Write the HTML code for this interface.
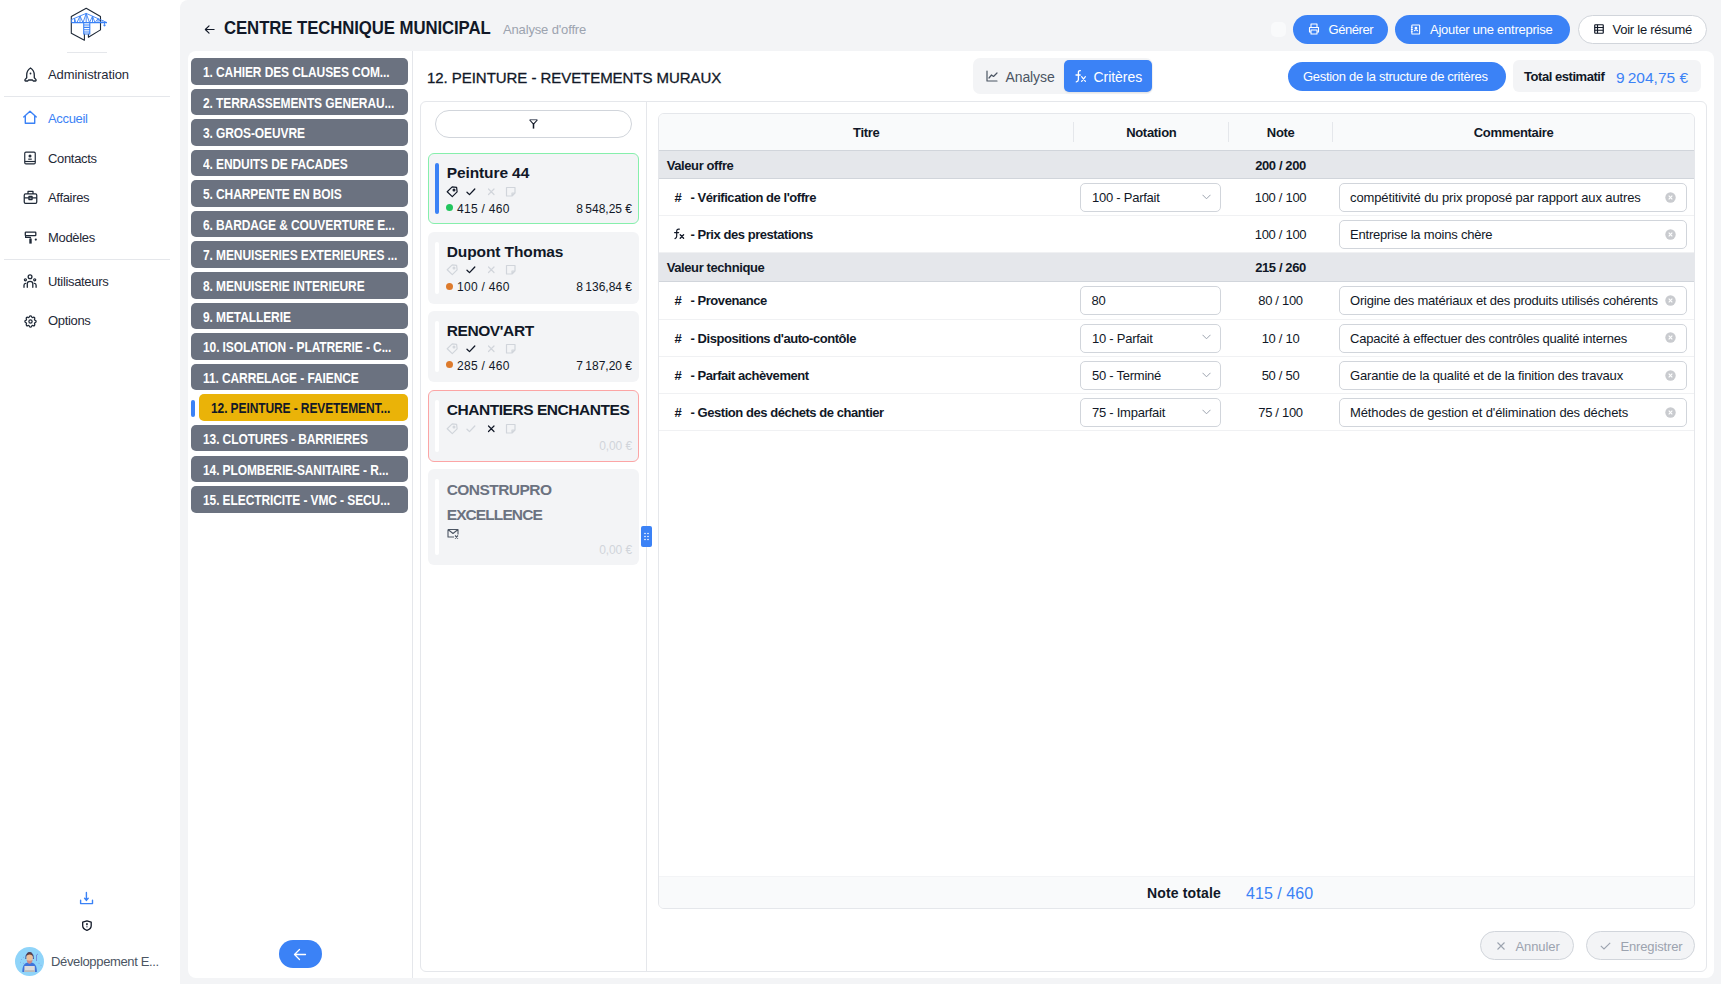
<!DOCTYPE html>
<html><head><meta charset="utf-8">
<style>
*{box-sizing:border-box;margin:0;padding:0}
html,body{width:1721px;height:984px;overflow:hidden;background:#fff;font-family:"Liberation Sans",sans-serif;color:#111827}
.abs{position:absolute}
svg{display:block}
/* sidebar */
.nav{position:absolute;left:48px;font-size:13px;color:#1f2937;white-space:nowrap;letter-spacing:-0.33px}
.nicon{position:absolute;left:23px;width:14px;height:14px}
.sep{position:absolute;height:1px;background:#e5e7eb}
/* gray area */
#gray{position:absolute;left:180px;top:0;width:1541px;height:984px;background:#f3f4f6;border-top-left-radius:8px}
#panel{position:absolute;left:188px;top:51px;width:1526px;height:927px;background:#fff;border-radius:8px}
.lot{position:absolute;left:191px;width:217px;height:26.5px;border-radius:5px;background:#6b7280;color:#fff;font-weight:700;font-size:14px;line-height:28.5px;padding-left:12px;white-space:nowrap;letter-spacing:-0.1px}
.lot span{display:inline-block;transform:scaleX(0.855);transform-origin:0 50%}
.btn{position:absolute;border-radius:999px;background:#3b82f6;color:#fff;font-size:13px;white-space:nowrap}
.card{position:absolute;left:428px;width:211px;background:#f3f4f6;border-radius:6px;border:1px solid transparent}
.card .bar{position:absolute;left:6px;top:9px;width:4px;border-radius:2px;background:#fff}
.card .ttl{position:absolute;left:17.7px;font-size:15.5px;font-weight:700;color:#111827;white-space:nowrap;letter-spacing:-0.1px}
.card .score{position:absolute;left:28px;font-size:12px;color:#111827;white-space:nowrap}
.card .amt{position:absolute;right:6px;font-size:12px;color:#111827;white-space:nowrap;letter-spacing:-0.1px}
.card .dot{position:absolute;left:17px;width:7px;height:7px;border-radius:50%}
.card .icons{position:absolute;left:18px;height:12px}
/* table */
#tbl{position:absolute;left:658px;top:113px;width:1037px;height:796px;border:1px solid #e5e7eb;border-radius:6px;overflow:hidden;background:#fff}
.th{position:absolute;top:0;height:37px;background:#f9fafb;font-size:13px;font-weight:700;line-height:37px;text-align:center;color:#111827}
.row{position:absolute;left:0;width:1035px;border-bottom:1px solid #f3f4f6;font-size:13px}
.grp{position:absolute;left:0;width:1035px;background:#e5e7eb;border-bottom:1px solid #d1d5db;font-size:13px;font-weight:700}
.sel{position:absolute;left:421px;width:141px;height:29px;border:1px solid #d1d5db;border-radius:5px;background:#fff;font-size:13px;line-height:27px;padding-left:11px;white-space:nowrap;letter-spacing:-0.2px}
.cmt{position:absolute;left:680px;width:348px;height:29px;border:1px solid #d1d5db;border-radius:5px;background:#fff;font-size:13px;line-height:27px;padding-left:10px;white-space:nowrap;letter-spacing:-0.25px}
.note{position:absolute;left:570px;width:104px;text-align:center;font-size:13px;white-space:nowrap;letter-spacing:-0.2px}
.rt{position:absolute;left:15px;font-size:13px;font-weight:700;white-space:nowrap;letter-spacing:-0.35px}
</style></head>
<body>
<!-- SIDEBAR -->
<div id="sidebar">
 <svg class="abs" style="left:60px;top:0px" width="55" height="50" viewBox="60 0 55 50">
  <path d="M84.4 33.8 L84.4 40.2 L71.3 33.2 L71.3 16.5 L86.2 8.3 L100.5 16.5 L100.5 29.9 L88.4 37.2 L88.4 33.8" fill="none" stroke="#1f2937" stroke-width="1.1" stroke-linejoin="round"/>
  <g stroke="#3b82f6" stroke-width="0.9" fill="none">
   <path d="M71.6 22.6 L107 22.6" stroke-width="1.1"/>
   <path d="M71.6 19.5 L86.2 13.4 L107 22.6"/>
   <path d="M86.2 13.4 L86.2 22.6 M80 16 L80 22.6 M74.5 18.3 L74.5 22.6 M92.5 16.2 L92.5 22.6 M98 18.7 L98 22.6"/>
   <path d="M71.6 19.5 L71.6 22.6 M74.5 18.3 L76 22.6 M80 16 L77 22.6 M80 16 L83 22.6 M86.2 13.4 L83 22.6 M86.2 13.4 L89.5 22.6 M92.5 16.2 L89.5 22.6 M92.5 16.2 L95 22.6 M98 18.7 L95 22.6 M98 18.7 L101 22.6 M103 20.5 L101 22.6"/>
   <path d="M83.7 22.6 L83.7 34 L89.8 34 L89.8 22.6 M83.7 25 H89.8 M83.7 27.4 H89.8 M83.7 29.8 H89.8 M83.7 32 H89.8" stroke-width="1.1"/>
   <path d="M104.5 22.6 V24.5"/>
  </g>
  <circle cx="104.5" cy="25.3" r="1.1" fill="#3b82f6"/>
 </svg>
 <div class="sep" style="left:67px;top:52px;width:40px"></div>
 <svg class="nicon" style="top:66.5px;left:23.5px;width:13px;height:15px" viewBox="0 0 13 15" fill="none" stroke="#1f2937" stroke-width="1.3" stroke-linejoin="round"><path d="M6.5 1C3.8 2.6 2.7 5 2.7 8.2v2.6L1 12.6c-.3.4 0 1.4.6 1.4h2.2l.7-1h4l.7 1h2.2c.6 0 .9-1 .6-1.4l-1.7-1.8V8.2C10.3 5 9.2 2.6 6.5 1z"/><circle cx="6.5" cy="6.5" r=".9" fill="#1f2937" stroke="none"/></svg>
 <div class="nav" style="top:67.8px;line-height:13px;letter-spacing:-0.1px">Administration</div>
 <div class="sep" style="left:4px;top:96px;width:166px"></div>
 <svg class="abs" style="left:22px;top:109px" width="16" height="16" viewBox="22 109 16 16" fill="none" stroke="#3b82f6" stroke-width="1.4" stroke-linejoin="round" stroke-linecap="round"><path d="M23.7 116.9L30 111.3 36.3 116.9M25.3 115.6V123.2H34.7V115.6"/></svg>
 <div class="nav" style="top:111.7px;line-height:13px;color:#3b82f6">Accueil</div>
 <svg class="nicon" style="top:151px" viewBox="0 0 24 24" fill="none" stroke="#1f2937" stroke-width="2" stroke-linejoin="round"><rect x="3" y="2" width="18" height="20" rx="2"/><path d="M3 18h18"/><circle cx="12" cy="8.5" r="1.6" fill="#1f2937"/><path d="M9 14h6" /></svg>
 <div class="nav" style="top:152.4px;line-height:13px">Contacts</div>
 <svg class="nicon" style="top:189.5px;left:22.5px;width:15px;height:14px" viewBox="0 0 24 22" fill="none" stroke="#1f2937" stroke-width="2" stroke-linejoin="round"><rect x="2" y="6" width="20" height="15" rx="2"/><path d="M8 6V2h8v4M2 12.5h20"/><rect x="9.5" y="10" width="5" height="5"/></svg>
 <div class="nav" style="top:191px;line-height:13px">Affaires</div>
 <svg class="nicon" style="top:231px;left:23.5px;width:14px;height:13px" viewBox="0 0 14 13" fill="none" stroke="#1f2937" stroke-linejoin="round"><rect x="1.3" y="1.1" width="10.5" height="3.6" rx=".6" stroke-width="1.3"/><path d="M1.6 4.7V6.4H6.5V7.6" stroke-width="1.2"/><rect x="5.3" y="7.6" width="2.4" height="5" fill="#1f2937" stroke="none"/><circle cx="11.8" cy="8.6" r="1.1" fill="#1f2937" stroke="none"/></svg>
 <div class="nav" style="top:230.6px;line-height:13px">Modèles</div>
 <div class="sep" style="left:4px;top:259px;width:166px"></div>
 <svg class="abs" style="left:22px;top:272px" width="16" height="17" viewBox="22 272 16 17" fill="none" stroke="#1f2937" stroke-width="1.3" stroke-linecap="round"><circle cx="30.05" cy="276.8" r="1.9"/><circle cx="25.4" cy="279.8" r="1.05" stroke-width="1.2"/><circle cx="34.7" cy="279.8" r="1.05" stroke-width="1.2"/><path d="M27.3 287.3V283.6C27.3 282.1 28.5 281.4 30.05 281.4S32.8 282.1 32.8 283.6V287.3"/><path d="M24 287.3V285.2C24 284.2 24.6 283.5 25.7 283.4M36.1 287.3V285.2C36.1 284.2 35.5 283.5 34.4 283.4"/></svg>
 <div class="nav" style="top:274.7px;line-height:13px">Utilisateurs</div>
 <svg class="nicon" style="top:313.8px;left:22.5px;width:15px;height:15px" viewBox="0 0 24 24" fill="none" stroke="#1f2937" stroke-width="2" stroke-linejoin="round"><path d="M10.325 4.317c.426-1.756 2.924-1.756 3.35 0a1.724 1.724 0 0 0 2.573 1.066c1.543-.94 3.31.826 2.37 2.37a1.724 1.724 0 0 0 1.065 2.572c1.756.426 1.756 2.924 0 3.35a1.724 1.724 0 0 0-1.066 2.573c.94 1.543-.826 3.31-2.37 2.37a1.724 1.724 0 0 0-2.572 1.065c-.426 1.756-2.924 1.756-3.35 0a1.724 1.724 0 0 0-2.573-1.066c-1.543.94-3.31-.826-2.37-2.37a1.724 1.724 0 0 0-1.065-2.572c-1.756-.426-1.756-2.924 0-3.35a1.724 1.724 0 0 0 1.066-2.573c-.94-1.543.826-3.31 2.37-2.37 1 .608 2.296.07 2.572-1.065z"/><circle cx="12" cy="12" r="2.6"/></svg>
 <div class="nav" style="top:314.4px;line-height:13px">Options</div>
 <svg class="abs" style="left:78px;top:889px" width="17" height="17" viewBox="78 889 17 17" fill="none" stroke="#3b82f6" stroke-width="1.4" stroke-linecap="round" stroke-linejoin="round"><path d="M86.4 892.4V900.4M84.6 898.3L86.4 900.4 88.2 898.3M80.6 900.3V903.6H92.5V900.3"/></svg>
 <svg class="abs" style="left:80px;top:918px" width="14" height="15" viewBox="80 918 14 15" fill="none" stroke="#111827" stroke-width="1.3" stroke-linejoin="round"><path d="M86.95 920.9L82.7 922.2V925.8C82.7 928 84.5 929.6 86.95 930.3 89.4 929.6 91.2 928 91.2 925.8V922.2Z"/><path d="M86.95 923.8V924.6" stroke-width="1.6" stroke-linecap="round"/><path d="M86.95 926V927.4" stroke="#6b7280" stroke-width="1.3"/></svg>
 <div class="abs" style="left:15px;top:947px;width:29px;height:29px;border-radius:50%;background:#8fd4f9;overflow:hidden">
  <svg width="29" height="29" viewBox="0 0 29 29">
   <g fill="#7b8fd8" opacity=".7"><circle cx="6.5" cy="12.5" r=".5"/><circle cx="8.5" cy="10.2" r=".5"/><circle cx="5.5" cy="15.3" r=".5"/><circle cx="8.5" cy="16.3" r=".5"/><circle cx="24" cy="16.3" r=".5"/><circle cx="26" cy="18.3" r=".5"/></g>
   <path d="M21.5 8v6M21.5 8l1.5-1" stroke="#6f7fd6" stroke-width=".8" fill="none"/>
   <path d="M7.3 25c0-6 1.8-9.8 7.3-9.8s7.3 3.8 7.3 9.8z" fill="#3f74da"/>
   <ellipse cx="14.6" cy="10.6" rx="3.3" ry="4.1" fill="#ecc19c"/>
   <path d="M11.6 13c.5 2.6 1.6 3.8 3 3.8s2.5-1.2 3-3.8c-1 .6-2 .8-3 .8s-2-.2-3-.8z" fill="#d08c86"/>
   <path d="M11.2 9.5c0-3 1.5-4.4 3.4-4.4s3.4 1.4 3.4 4.4c-.8-1.3-2-2-3.4-2s-2.6.7-3.4 2z" fill="#6b4030"/>
   <path d="M10.8 12c-.4-4 1.4-6.2 3.8-6.2s4.2 2.2 3.8 6.2" stroke="#3a4585" stroke-width=".9" fill="none"/>
   <rect x="9.4" y="19" width="10.4" height="6" rx=".6" fill="#dcdcdc"/>
   <rect x="9.4" y="23.2" width="10.4" height="1.8" fill="#b9b9b9"/>
  </svg>
 </div>
 <div class="nav" style="left:51px;top:955px;line-height:13px;color:#4b5563;letter-spacing:-0.35px">Développement E...</div>
</div>
<div id="gray"></div>
<div id="panel"></div>

<svg class="abs" style="left:204px;top:23.5px" width="11" height="11" viewBox="0 0 12 12" fill="none" stroke="#111827" stroke-width="1.3" stroke-linecap="round" stroke-linejoin="round"><path d="M11 6H1.5M5.5 2L1.5 6l4 4"/></svg>
<div class="abs" style="left:224px;top:18.6px;font-size:18px;line-height:18px;font-weight:700;letter-spacing:-0.1px;white-space:nowrap;color:#111827;transform:scaleX(0.932);transform-origin:0 50%">CENTRE TECHNIQUE MUNICIPAL</div>
<div class="abs" style="left:503px;top:22.8px;font-size:13px;line-height:13px;color:#9ca3af;white-space:nowrap;letter-spacing:-0.15px">Analyse d'offre</div>
<div class="abs" style="left:1271px;top:21.5px;width:15px;height:15px;border-radius:5px;background:#f9fafb"></div>
<div class="btn" style="left:1293px;top:15px;width:95px;height:29px"></div>
<svg class="abs" style="left:1308.3px;top:23px" width="12" height="12" viewBox="0 0 24 24" fill="none" stroke="#fff" stroke-width="2.2" stroke-linejoin="round"><path d="M6 9V2h12v7M6 18H3V9h18v9h-3"/><rect x="6" y="14" width="12" height="8"/></svg>
<div class="abs" style="left:1328.5px;top:22.8px;font-size:13px;line-height:13px;color:#fff;white-space:nowrap;letter-spacing:-0.45px">Générer</div>
<div class="btn" style="left:1395px;top:15px;width:175px;height:29px"></div>
<svg class="abs" style="left:1410.3px;top:23.5px" width="11" height="11" viewBox="0 0 22 24" fill="none" stroke="#fff" stroke-width="2.2" stroke-linejoin="round"><rect x="3" y="2" width="17" height="20" rx="1.5"/><path d="M1 7h4M1 12h4M1 17h4"/><circle cx="12" cy="9" r="2" fill="#fff"/><path d="M8 16c0-2 2-3 4-3s4 1 4 3"/></svg>
<div class="abs" style="left:1430px;top:22.8px;font-size:13px;line-height:13px;color:#fff;white-space:nowrap;letter-spacing:-0.25px">Ajouter une entreprise</div>
<div class="btn" style="left:1577.5px;top:15px;width:129px;height:29px;background:#fff;border:1px solid #d1d5db"></div>
<svg class="abs" style="left:1594px;top:24px" width="10" height="10" viewBox="0 0 20 20" fill="none" stroke="#111827" stroke-width="2.4"><rect x="1.5" y="1.5" width="17" height="17" rx="1"/><path d="M1.5 7h17M1.5 12.5h17M7 1.5v17"/></svg>
<div class="abs" style="left:1612.5px;top:22.8px;font-size:13px;line-height:13px;color:#111827;white-space:nowrap;letter-spacing:-0.25px">Voir le résumé</div>
<div class="lot" style="top:58.00px"><span>1. CAHIER DES CLAUSES COM...</span></div>
<div class="lot" style="top:88.58px"><span>2. TERRASSEMENTS GENERAU...</span></div>
<div class="lot" style="top:119.16px"><span>3. GROS-OEUVRE</span></div>
<div class="lot" style="top:149.74px"><span>4. ENDUITS DE FACADES</span></div>
<div class="lot" style="top:180.32px"><span>5. CHARPENTE EN BOIS</span></div>
<div class="lot" style="top:210.90px"><span>6. BARDAGE &amp; COUVERTURE E...</span></div>
<div class="lot" style="top:241.48px"><span>7. MENUISERIES EXTERIEURES ...</span></div>
<div class="lot" style="top:272.06px"><span>8. MENUISERIE INTERIEURE</span></div>
<div class="lot" style="top:302.64px"><span>9. METALLERIE</span></div>
<div class="lot" style="top:333.22px"><span>10. ISOLATION - PLATRERIE - C...</span></div>
<div class="lot" style="top:363.80px"><span>11. CARRELAGE - FAIENCE</span></div>
<div class="abs" style="left:191px;top:399.58px;width:4px;height:17.5px;border-radius:2px;background:#3b82f6"></div><div class="lot" style="top:394.38px;left:199px;width:209px;background:#eab308;color:#111827"><span>12. PEINTURE - REVETEMENT...</span></div>
<div class="lot" style="top:424.96px"><span>13. CLOTURES - BARRIERES</span></div>
<div class="lot" style="top:455.54px"><span>14. PLOMBERIE-SANITAIRE - R...</span></div>
<div class="lot" style="top:486.12px"><span>15. ELECTRICITE - VMC - SECU...</span></div>
<div class="abs" style="left:412px;top:51px;width:1px;height:927px;background:#e5e7eb"></div>

<div class="abs" style="left:427px;top:70.2px;font-size:15px;line-height:15px;color:#111827;white-space:nowrap;letter-spacing:-0.05px;-webkit-text-stroke:0.3px #111827">12. PEINTURE - REVETEMENTS MURAUX</div>
<div class="abs" style="left:973px;top:58px;width:180px;height:36px;border-radius:7px;background:#f3f4f6"></div>
<div class="abs" style="left:1064px;top:60px;width:88px;height:32px;border-radius:5px;background:#3b82f6;box-shadow:0 1px 2px rgba(0,0,0,.08)"></div>
<svg class="abs" style="left:986px;top:70px" width="12" height="12" viewBox="0 0 12 12" fill="none" stroke="#4b5563" stroke-width="1.2" stroke-linecap="round" stroke-linejoin="round"><path d="M1 1v10h10"/><path d="M3 8l2.5-3 2 1.5L11 3"/></svg>
<div class="abs" style="left:1005.5px;top:70.2px;font-size:14px;line-height:14px;color:#4b5563;white-space:nowrap;letter-spacing:-0.1px">Analyse</div>
<svg class="abs" style="left:1073px;top:68px" width="15" height="16" viewBox="1073 68 15 16" fill="none" stroke="#fff" stroke-width="1.3" stroke-linecap="round"><path d="M1080.3 70.6C1079 70.3 1078.4 71.3 1078.4 72.6V79.5C1078.4 80.8 1077.5 81.6 1076.3 81.8"/><path d="M1076 75H1080.2"/><path d="M1081.6 76.6L1085.4 81.3M1085.4 76.6L1081.6 81.3" stroke-width="1.2"/></svg>
<div class="abs" style="left:1093.5px;top:70.2px;font-size:14px;line-height:14px;color:#fff;white-space:nowrap;letter-spacing:-0.05px">Critères</div>
<div class="btn" style="left:1288px;top:62px;width:218px;height:29px"></div>
<div class="abs" style="left:1303px;top:69.8px;font-size:13px;line-height:13px;color:#fff;white-space:nowrap;letter-spacing:-0.3px">Gestion de la structure de critères</div>
<div class="abs" style="left:1513px;top:60px;width:187.5px;height:32px;border-radius:6px;background:#f3f4f6"></div>
<div class="abs" style="left:1524px;top:69.8px;font-size:13px;line-height:13px;font-weight:700;color:#111827;white-space:nowrap;letter-spacing:-0.45px">Total estimatif</div>
<div class="abs" style="left:1616px;top:69.5px;font-size:15.5px;line-height:15.5px;color:#3b82f6;white-space:nowrap;letter-spacing:0.15px">9&#8239;204,75 €</div>
<div class="abs" style="left:420px;top:101px;width:1287px;height:870.5px;border:1px solid #e5e7eb;border-radius:6px"></div>
<div class="abs" style="left:646px;top:102px;width:1px;height:869px;background:#e5e7eb"></div>
<div class="abs" style="left:435px;top:110px;width:197px;height:28px;border:1px solid #d1d5db;border-radius:14px;background:#fff"></div>
<svg class="abs" style="left:528.5px;top:119px" width="9" height="10" viewBox="0 0 9 10" fill="none" stroke-linejoin="round"><path d="M0.6 0.7H8.4" stroke="#6b7280" stroke-width="1.2"/><path d="M0.7 1L4.5 5.2 8.3 1" stroke="#111827" stroke-width="1.1"/><path d="M4.5 5V9.6" stroke="#111827" stroke-width="1.5"/></svg>
<div class="abs" style="left:641px;top:526px;width:11px;height:21px;border-radius:2px;background:#3b82f6"></div>
<svg class="abs" style="left:641px;top:526px" width="11" height="21" viewBox="0 0 11 21" fill="#fff"><circle cx="4" cy="7.5" r=".8"/><circle cx="7" cy="7.5" r=".8"/><circle cx="4" cy="10.5" r=".8"/><circle cx="7" cy="10.5" r=".8"/><circle cx="4" cy="13.5" r=".8"/><circle cx="7" cy="13.5" r=".8"/></svg>
<div class="btn" style="left:279px;top:940px;width:43px;height:28px"></div>
<svg class="abs" style="left:293px;top:947.5px" width="14" height="13" viewBox="0 0 14 13" fill="none" stroke="#fff" stroke-width="1.3" stroke-linecap="round" stroke-linejoin="round"><path d="M12.5 6.5H1.5M6.5 1.5l-5 5 5 5"/></svg>
<!--CARDS-START-->
<div class="card" style="top:153.4px;height:71px;border-color:#86efac"><div class="bar" style="height:51.0px;background:#3b82f6"></div><div class="ttl" style="top:10.93px;line-height:15px">Peinture 44</div><svg class="abs" style="left:17.3px;top:31.4px" width="72" height="12" viewBox="0 0 72 12" fill="none" stroke-width="1.2" stroke-linejoin="round" stroke-linecap="round">
<path d="M1.2 5.7 L6.2 0.9 L10.6 1.4 L11.1 5.8 L6.3 10.6 Z" stroke="#111827"/><circle cx="8" cy="4" r=".9" stroke="#111827"/>
<path d="M21 6.2 L23.5 8.6 L28.8 3" stroke="#111827" stroke-width="1.3"/>
<path d="M42.5 3 L48 8.5 M48 3 L42.5 8.5" stroke="#d1d5db"/>
<path d="M60.5 1.5 H69 V7 L66 10 H60.5 Z M66 10 V7 H69" stroke="#d1d5db"/>
</svg><div class="dot" style="top:49.6px;left:16.6px;background:#22c55e"></div><div class="score" style="top:48.3px;line-height:12px;letter-spacing:0.3px">415 / 460</div><div class="amt" style="top:48.3px;line-height:12px">8&#8239;548,25 €</div></div>
<div class="card" style="top:232px;height:71.5px;border-color:transparent"><div class="bar" style="height:51.5px;background:#fff"></div><div class="ttl" style="top:10.93px;line-height:15px">Dupont Thomas</div><svg class="abs" style="left:17.3px;top:31.4px" width="72" height="12" viewBox="0 0 72 12" fill="none" stroke-width="1.2" stroke-linejoin="round" stroke-linecap="round">
<path d="M1.2 5.7 L6.2 0.9 L10.6 1.4 L11.1 5.8 L6.3 10.6 Z" stroke="#d1d5db"/><circle cx="8" cy="4" r=".9" stroke="#d1d5db"/>
<path d="M21 6.2 L23.5 8.6 L28.8 3" stroke="#111827" stroke-width="1.3"/>
<path d="M42.5 3 L48 8.5 M48 3 L42.5 8.5" stroke="#d1d5db"/>
<path d="M60.5 1.5 H69 V7 L66 10 H60.5 Z M66 10 V7 H69" stroke="#d1d5db"/>
</svg><div class="dot" style="top:49.6px;left:16.6px;background:#dd7a2c"></div><div class="score" style="top:48.3px;line-height:12px;letter-spacing:0.3px">100 / 460</div><div class="amt" style="top:48.3px;line-height:12px">8&#8239;136,84 €</div></div>
<div class="card" style="top:310.8px;height:71.7px;border-color:transparent"><div class="bar" style="height:51.7px;background:#fff"></div><div class="ttl" style="top:10.93px;line-height:15px"><span style='letter-spacing:-0.4px'>RENOV'ART</span></div><svg class="abs" style="left:17.3px;top:31.4px" width="72" height="12" viewBox="0 0 72 12" fill="none" stroke-width="1.2" stroke-linejoin="round" stroke-linecap="round">
<path d="M1.2 5.7 L6.2 0.9 L10.6 1.4 L11.1 5.8 L6.3 10.6 Z" stroke="#d1d5db"/><circle cx="8" cy="4" r=".9" stroke="#d1d5db"/>
<path d="M21 6.2 L23.5 8.6 L28.8 3" stroke="#111827" stroke-width="1.3"/>
<path d="M42.5 3 L48 8.5 M48 3 L42.5 8.5" stroke="#d1d5db"/>
<path d="M60.5 1.5 H69 V7 L66 10 H60.5 Z M66 10 V7 H69" stroke="#d1d5db"/>
</svg><div class="dot" style="top:49.6px;left:16.6px;background:#dd7a2c"></div><div class="score" style="top:48.3px;line-height:12px;letter-spacing:0.3px">285 / 460</div><div class="amt" style="top:48.3px;line-height:12px">7&#8239;187,20 €</div></div>
<div class="card" style="top:390.4px;height:71.2px;border-color:#fca5a5"><div class="bar" style="height:51.2px;background:#fff"></div><div class="ttl" style="top:10.93px;line-height:15px"><span style='letter-spacing:-0.45px'>CHANTIERS ENCHANTES</span></div><svg class="abs" style="left:17.3px;top:31.4px" width="72" height="12" viewBox="0 0 72 12" fill="none" stroke-width="1.2" stroke-linejoin="round" stroke-linecap="round">
<path d="M1.2 5.7 L6.2 0.9 L10.6 1.4 L11.1 5.8 L6.3 10.6 Z" stroke="#d1d5db"/><circle cx="8" cy="4" r=".9" stroke="#d1d5db"/>
<path d="M21 6.2 L23.5 8.6 L28.8 3" stroke="#d1d5db" stroke-width="1.3"/>
<path d="M42.5 3 L48 8.5 M48 3 L42.5 8.5" stroke="#111827"/>
<path d="M60.5 1.5 H69 V7 L66 10 H60.5 Z M66 10 V7 H69" stroke="#d1d5db"/>
</svg><div class="amt" style="top:48.3px;line-height:12px;color:#d1d5db">0,00 €</div></div>
<div class="card" style="top:469.2px;height:96px">
<div class="bar" style="height:76px"></div>
<div class="ttl" style="top:6.6px;line-height:25.6px;color:#6b7280"><span style='letter-spacing:-0.55px'>CONSTRUPRO</span><br><span style='letter-spacing:-0.9px'>EXCELLENCE</span></div>
<svg class="abs" style="left:18px;top:57.5px" width="12" height="11" viewBox="0 0 12 11" fill="none" stroke="#4b5563" stroke-width="1.1" stroke-linejoin="round"><path d="M1 1.5h10v5M1 1.5v7.5h6M1 1.5l5 4 5-4"/><path d="M8 7.5l3 3M11 7.5l-3 3"/></svg>
<div class="amt" style="top:74.3px;line-height:12px;color:#d1d5db">0,00 €</div>
</div>
<!--CARDS-END-->
<!--TBL-START-->
<div class="abs" style="left:658px;top:113px;width:1037px;height:796px;border:1px solid #e5e7eb;border-radius:6px;background:#fff;overflow:hidden">
<div class="abs" style="left:0;top:0;width:1035px;height:37.2px;background:#f9fafb;border-bottom:1px solid #d1d5db"></div>
<div class="abs" style="left:0;top:762px;width:1035px;height:32px;background:#f9fafb"></div>
</div>
<div class="abs" style="left:1073.0px;top:122px;width:1px;height:20px;background:#e5e7eb"></div>
<div class="abs" style="left:1227.8px;top:122px;width:1px;height:20px;background:#e5e7eb"></div>
<div class="abs" style="left:1332.0px;top:122px;width:1px;height:20px;background:#e5e7eb"></div>
<div class="abs" style="left:716.30px;width:300px;text-align:center;top:126.20px;font-size:13px;line-height:13px;font-weight:700;color:#111827;letter-spacing:-0.3px;white-space:nowrap;">Titre</div>
<div class="abs" style="left:1001.30px;width:300px;text-align:center;top:126.20px;font-size:13px;line-height:13px;font-weight:700;color:#111827;letter-spacing:-0.3px;white-space:nowrap;">Notation</div>
<div class="abs" style="left:1130.70px;width:300px;text-align:center;top:126.20px;font-size:13px;line-height:13px;font-weight:700;color:#111827;letter-spacing:-0.3px;white-space:nowrap;">Note</div>
<div class="abs" style="left:1363.60px;width:300px;text-align:center;top:126.20px;font-size:13px;line-height:13px;font-weight:700;color:#111827;letter-spacing:-0.3px;white-space:nowrap;">Commentaire</div>
<div class="abs" style="left:659px;top:150.6px;width:1035px;height:28.50px;background:#e5e7eb;border-bottom:1px solid #d1d5db"></div><div class="abs" style="left:666.7px;top:158.85px;font-size:13px;line-height:13px;font-weight:700;color:#111827;letter-spacing:-0.4px;white-space:nowrap;">Valeur offre</div><div class="abs" style="left:1130.50px;width:300px;text-align:center;top:158.85px;font-size:13px;line-height:13px;font-weight:700;color:#111827;letter-spacing:-0.4px;white-space:nowrap;">200 / 200</div>
<div class="abs" style="left:659px;top:214.90px;width:1035px;height:1px;background:#f0f1f3"></div><div class="abs" style="left:674.5px;top:190.70px;font-size:13px;line-height:13px;font-weight:700;color:#111827;letter-spacing:0px;white-space:nowrap;">#</div><div class="abs" style="left:690.5px;top:190.70px;font-size:13px;line-height:13px;font-weight:700;color:#111827;letter-spacing:-0.45px;white-space:nowrap;">- Vérification de l'offre</div><div class="abs" style="left:1080.3px;top:182.80px;width:140.5px;height:29px;border:1px solid #d1d5db;border-radius:5px;background:#fff"></div><div class="abs" style="left:1092px;top:190.70px;font-size:13px;line-height:13px;font-weight:400;color:#111827;letter-spacing:-0.25px;white-space:nowrap;">100 - Parfait</div><svg class="abs" style="left:1201.5px;top:193.50px" width="9" height="6" viewBox="0 0 9 6" fill="none" stroke="#9ca3af" stroke-width="1"><path d="M0.5 0.8L4.5 4.8 8.5 0.8"/></svg><div class="abs" style="left:1130.50px;width:300px;text-align:center;top:190.70px;font-size:13px;line-height:13px;font-weight:400;color:#111827;letter-spacing:-0.3px;white-space:nowrap;">100 / 100</div><div class="abs" style="left:1339.3px;top:182.80px;width:347.5px;height:29px;border:1px solid #d1d5db;border-radius:5px;background:#fff"></div><div class="abs" style="left:1350px;top:190.70px;font-size:13px;line-height:13px;font-weight:400;color:#111827;letter-spacing:-0.12px;white-space:nowrap;">compétitivité du prix proposé par rapport aux autres</div><svg class="abs" style="left:1664.5px;top:191.50px" width="11" height="11" viewBox="0 0 11 11"><circle cx="5.5" cy="5.5" r="5.2" fill="#c9cbcf"/><path d="M3.7 3.7l3.6 3.6M7.3 3.7l-3.6 3.6" stroke="#fff" stroke-width="1.1"/></svg>
<div class="abs" style="left:659px;top:252.10px;width:1035px;height:1px;background:#f0f1f3"></div><svg class="abs" style="left:673px;top:226.50px" width="12" height="14" viewBox="0 0 12 14" fill="none" stroke="#111827" stroke-width="1.2" stroke-linecap="round"><path d="M6.3 2.1C4.6 1.8 3.7 2.8 3.7 4.2V9.3C3.7 10.5 3 11.3 2 11.6"/><path d="M1.6 5.6H5.6"/><path d="M7.2 7.7L10.6 11.2M10.6 7.7L7.2 11.2" stroke-width="1.3"/></svg><div class="abs" style="left:690.5px;top:227.70px;font-size:13px;line-height:13px;font-weight:700;color:#111827;letter-spacing:-0.45px;white-space:nowrap;">- Prix des prestations</div><div class="abs" style="left:1130.50px;width:300px;text-align:center;top:227.70px;font-size:13px;line-height:13px;font-weight:400;color:#111827;letter-spacing:-0.3px;white-space:nowrap;">100 / 100</div><div class="abs" style="left:1339.3px;top:219.80px;width:347.5px;height:29px;border:1px solid #d1d5db;border-radius:5px;background:#fff"></div><div class="abs" style="left:1350px;top:227.70px;font-size:13px;line-height:13px;font-weight:400;color:#111827;letter-spacing:-0.2px;white-space:nowrap;">Entreprise la moins chère</div><svg class="abs" style="left:1664.5px;top:228.50px" width="11" height="11" viewBox="0 0 11 11"><circle cx="5.5" cy="5.5" r="5.2" fill="#c9cbcf"/><path d="M3.7 3.7l3.6 3.6M7.3 3.7l-3.6 3.6" stroke="#fff" stroke-width="1.1"/></svg>
<div class="abs" style="left:659px;top:253.1px;width:1035px;height:28.70px;background:#e5e7eb;border-bottom:1px solid #d1d5db"></div><div class="abs" style="left:666.7px;top:261.45px;font-size:13px;line-height:13px;font-weight:700;color:#111827;letter-spacing:-0.4px;white-space:nowrap;">Valeur technique</div><div class="abs" style="left:1130.50px;width:300px;text-align:center;top:261.45px;font-size:13px;line-height:13px;font-weight:700;color:#111827;letter-spacing:-0.4px;white-space:nowrap;">215 / 260</div>
<div class="abs" style="left:659px;top:318.90px;width:1035px;height:1px;background:#f0f1f3"></div><div class="abs" style="left:674.5px;top:294.05px;font-size:13px;line-height:13px;font-weight:700;color:#111827;letter-spacing:0px;white-space:nowrap;">#</div><div class="abs" style="left:690.5px;top:294.05px;font-size:13px;line-height:13px;font-weight:700;color:#111827;letter-spacing:-0.45px;white-space:nowrap;">- Provenance</div><div class="abs" style="left:1080.3px;top:286.15px;width:140.5px;height:29px;border:1px solid #d1d5db;border-radius:5px;background:#fff"></div><div class="abs" style="left:1091.5px;top:294.05px;font-size:13px;line-height:13px;font-weight:400;color:#111827;letter-spacing:-0.25px;white-space:nowrap;">80</div><div class="abs" style="left:1130.50px;width:300px;text-align:center;top:294.05px;font-size:13px;line-height:13px;font-weight:400;color:#111827;letter-spacing:-0.3px;white-space:nowrap;">80 / 100</div><div class="abs" style="left:1339.3px;top:286.15px;width:347.5px;height:29px;border:1px solid #d1d5db;border-radius:5px;background:#fff"></div><div class="abs" style="left:1350px;top:294.05px;font-size:13px;line-height:13px;font-weight:400;color:#111827;letter-spacing:-0.22px;white-space:nowrap;">Origine des matériaux et des produits utilisés cohérents</div><svg class="abs" style="left:1664.5px;top:294.85px" width="11" height="11" viewBox="0 0 11 11"><circle cx="5.5" cy="5.5" r="5.2" fill="#c9cbcf"/><path d="M3.7 3.7l3.6 3.6M7.3 3.7l-3.6 3.6" stroke="#fff" stroke-width="1.1"/></svg>
<div class="abs" style="left:659px;top:356.00px;width:1035px;height:1px;background:#f0f1f3"></div><div class="abs" style="left:674.5px;top:331.65px;font-size:13px;line-height:13px;font-weight:700;color:#111827;letter-spacing:0px;white-space:nowrap;">#</div><div class="abs" style="left:690.5px;top:331.65px;font-size:13px;line-height:13px;font-weight:700;color:#111827;letter-spacing:-0.45px;white-space:nowrap;">- Dispositions d'auto-contôle</div><div class="abs" style="left:1080.3px;top:323.75px;width:140.5px;height:29px;border:1px solid #d1d5db;border-radius:5px;background:#fff"></div><div class="abs" style="left:1092px;top:331.65px;font-size:13px;line-height:13px;font-weight:400;color:#111827;letter-spacing:-0.25px;white-space:nowrap;">10 - Parfait</div><svg class="abs" style="left:1201.5px;top:334.45px" width="9" height="6" viewBox="0 0 9 6" fill="none" stroke="#9ca3af" stroke-width="1"><path d="M0.5 0.8L4.5 4.8 8.5 0.8"/></svg><div class="abs" style="left:1130.50px;width:300px;text-align:center;top:331.65px;font-size:13px;line-height:13px;font-weight:400;color:#111827;letter-spacing:-0.3px;white-space:nowrap;">10 / 10</div><div class="abs" style="left:1339.3px;top:323.75px;width:347.5px;height:29px;border:1px solid #d1d5db;border-radius:5px;background:#fff"></div><div class="abs" style="left:1350px;top:331.65px;font-size:13px;line-height:13px;font-weight:400;color:#111827;letter-spacing:-0.23px;white-space:nowrap;">Capacité à effectuer des contrôles qualité internes</div><svg class="abs" style="left:1664.5px;top:332.45px" width="11" height="11" viewBox="0 0 11 11"><circle cx="5.5" cy="5.5" r="5.2" fill="#c9cbcf"/><path d="M3.7 3.7l3.6 3.6M7.3 3.7l-3.6 3.6" stroke="#fff" stroke-width="1.1"/></svg>
<div class="abs" style="left:659px;top:393.10px;width:1035px;height:1px;background:#f0f1f3"></div><div class="abs" style="left:674.5px;top:368.75px;font-size:13px;line-height:13px;font-weight:700;color:#111827;letter-spacing:0px;white-space:nowrap;">#</div><div class="abs" style="left:690.5px;top:368.75px;font-size:13px;line-height:13px;font-weight:700;color:#111827;letter-spacing:-0.45px;white-space:nowrap;">- Parfait achèvement</div><div class="abs" style="left:1080.3px;top:360.85px;width:140.5px;height:29px;border:1px solid #d1d5db;border-radius:5px;background:#fff"></div><div class="abs" style="left:1092px;top:368.75px;font-size:13px;line-height:13px;font-weight:400;color:#111827;letter-spacing:-0.25px;white-space:nowrap;">50 - Terminé</div><svg class="abs" style="left:1201.5px;top:371.55px" width="9" height="6" viewBox="0 0 9 6" fill="none" stroke="#9ca3af" stroke-width="1"><path d="M0.5 0.8L4.5 4.8 8.5 0.8"/></svg><div class="abs" style="left:1130.50px;width:300px;text-align:center;top:368.75px;font-size:13px;line-height:13px;font-weight:400;color:#111827;letter-spacing:-0.3px;white-space:nowrap;">50 / 50</div><div class="abs" style="left:1339.3px;top:360.85px;width:347.5px;height:29px;border:1px solid #d1d5db;border-radius:5px;background:#fff"></div><div class="abs" style="left:1350px;top:368.75px;font-size:13px;line-height:13px;font-weight:400;color:#111827;letter-spacing:-0.17px;white-space:nowrap;">Garantie de la qualité et de la finition des travaux</div><svg class="abs" style="left:1664.5px;top:369.55px" width="11" height="11" viewBox="0 0 11 11"><circle cx="5.5" cy="5.5" r="5.2" fill="#c9cbcf"/><path d="M3.7 3.7l3.6 3.6M7.3 3.7l-3.6 3.6" stroke="#fff" stroke-width="1.1"/></svg>
<div class="abs" style="left:659px;top:430.00px;width:1035px;height:1px;background:#f0f1f3"></div><div class="abs" style="left:674.5px;top:405.75px;font-size:13px;line-height:13px;font-weight:700;color:#111827;letter-spacing:0px;white-space:nowrap;">#</div><div class="abs" style="left:690.5px;top:405.75px;font-size:13px;line-height:13px;font-weight:700;color:#111827;letter-spacing:-0.45px;white-space:nowrap;">- Gestion des déchets de chantier</div><div class="abs" style="left:1080.3px;top:397.85px;width:140.5px;height:29px;border:1px solid #d1d5db;border-radius:5px;background:#fff"></div><div class="abs" style="left:1092px;top:405.75px;font-size:13px;line-height:13px;font-weight:400;color:#111827;letter-spacing:-0.25px;white-space:nowrap;">75 - Imparfait</div><svg class="abs" style="left:1201.5px;top:408.55px" width="9" height="6" viewBox="0 0 9 6" fill="none" stroke="#9ca3af" stroke-width="1"><path d="M0.5 0.8L4.5 4.8 8.5 0.8"/></svg><div class="abs" style="left:1130.50px;width:300px;text-align:center;top:405.75px;font-size:13px;line-height:13px;font-weight:400;color:#111827;letter-spacing:-0.3px;white-space:nowrap;">75 / 100</div><div class="abs" style="left:1339.3px;top:397.85px;width:347.5px;height:29px;border:1px solid #d1d5db;border-radius:5px;background:#fff"></div><div class="abs" style="left:1350px;top:405.75px;font-size:13px;line-height:13px;font-weight:400;color:#111827;letter-spacing:-0.13px;white-space:nowrap;">Méthodes de gestion et d'élimination des déchets</div><svg class="abs" style="left:1664.5px;top:406.55px" width="11" height="11" viewBox="0 0 11 11"><circle cx="5.5" cy="5.5" r="5.2" fill="#c9cbcf"/><path d="M3.7 3.7l3.6 3.6M7.3 3.7l-3.6 3.6" stroke="#fff" stroke-width="1.1"/></svg>
<div class="abs" style="left:659px;top:875.5px;width:1035px;height:1px;background:#f3f4f6"></div>
<div class="abs" style="left:1147px;top:886.15px;font-size:14px;line-height:14px;font-weight:700;color:#111827;letter-spacing:0.15px;white-space:nowrap;">Note totale</div>
<div class="abs" style="left:1246px;top:885.96px;font-size:16px;line-height:16px;font-weight:400;color:#3b82f6;letter-spacing:0.05px;white-space:nowrap;">415 / 460</div>
<div class="abs" style="left:1480px;top:931px;width:94px;height:28.5px;border:1px solid #d1d5db;border-radius:15px;background:#f3f4f6"></div>
<svg class="abs" style="left:1497px;top:941.5px" width="8" height="8" viewBox="0 0 8 8" stroke="#9ca3af" stroke-width="1.1"><path d="M0.5 0.5l7 7M7.5 0.5l-7 7"/></svg>
<div class="abs" style="left:1515.5px;top:939.50px;font-size:13px;line-height:13px;font-weight:400;color:#9ca3af;letter-spacing:-0.1px;white-space:nowrap;">Annuler</div>
<div class="abs" style="left:1585.5px;top:931px;width:109px;height:28.5px;border:1px solid #d1d5db;border-radius:15px;background:#f3f4f6"></div>
<svg class="abs" style="left:1600px;top:941.5px" width="11" height="8" viewBox="0 0 11 8" fill="none" stroke="#9ca3af" stroke-width="1.1"><path d="M0.8 3.8l3.2 3.2L10.2 0.8"/></svg>
<div class="abs" style="left:1620.5px;top:939.50px;font-size:13px;line-height:13px;font-weight:400;color:#9ca3af;letter-spacing:-0.15px;white-space:nowrap;">Enregistrer</div>
<!--TBL-END-->

</body></html>
